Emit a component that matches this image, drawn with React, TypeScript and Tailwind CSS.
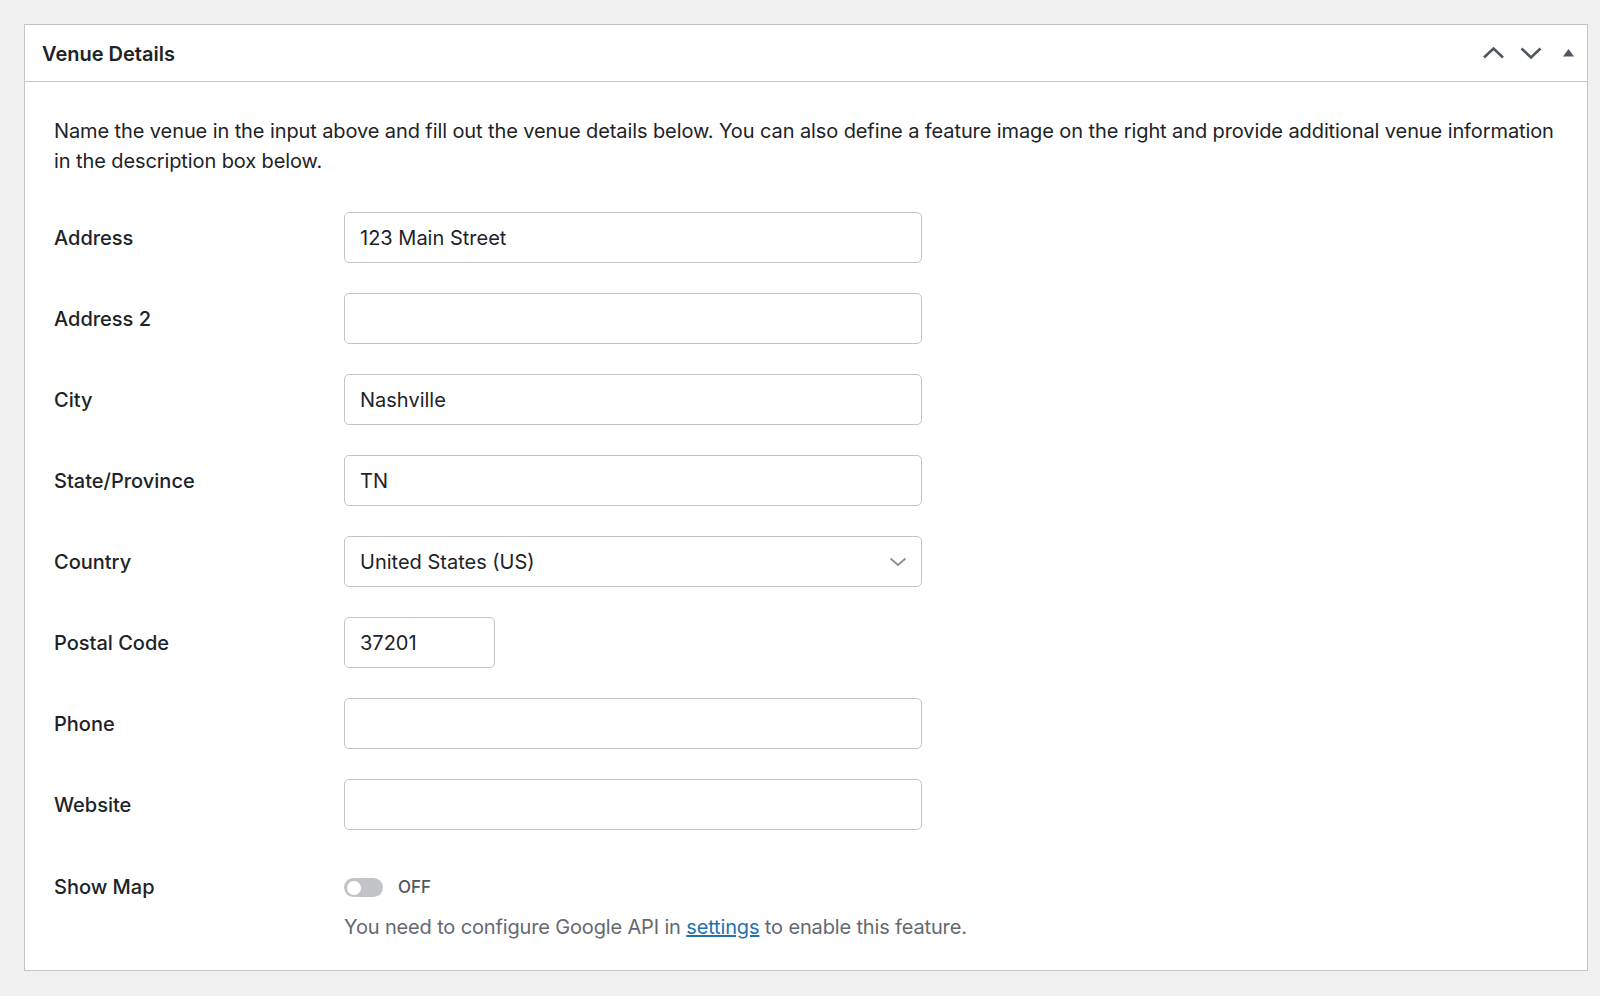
import React from "react";

const font = { fontFamily: "Inter, 'Noto Sans', sans-serif" };

function Field({ label, value, narrow }: { label: string; value?: string; narrow?: boolean }) {
  return (
    <div className="flex items-center">
      <div className="w-[290px] shrink-0 text-[20px] font-medium text-[#1d2327]">{label}</div>
      <div
        className={`${narrow ? "w-[151px]" : "w-[578px]"} h-[51px] rounded-[5px] border border-[#c3c4c7] bg-white flex items-center px-[15px] text-[20px] text-[#1d2327]`}
      >
        {value}
      </div>
    </div>
  );
}

export default function App() {
  return (
    <div className="min-h-[996px] bg-[#f0f0f1] pt-[24px] pl-[24px] pr-[12px]" style={font}>
      <div className="border border-[#c3c4c7] bg-white h-[947px]">
        <div className="h-[57px] border-b border-[#c3c4c7] flex items-center pl-[17px] pr-[12px]">
          <div className="text-[20px] font-semibold text-[#1d2327] flex-1 pt-[2px]">Venue Details</div>
          <svg width="92" height="20" viewBox="0 0 92 20">
            <path d="M1 14.5 L10.5 5.5 L20 14.5" stroke="#50575e" strokeWidth="2.6" fill="none" />
            <path d="M38.5 5.5 L48 14.5 L57.5 5.5" stroke="#50575e" strokeWidth="2.6" fill="none" />
            <path d="M80 13.5 L85.5 6 L91 13.5 Z" fill="#50575e" />
          </svg>
        </div>
        <div className="pl-[29px] pr-[22px] pt-[34px]">
          <p className="text-[20px] leading-[30px] text-[#1d2327] tracking-[-0.1px]">
            Name the venue in the input above and fill out the venue details below. You can also define a feature image on the right and provide additional venue information in the description box below.
          </p>
          <div className="mt-[36px] flex flex-col gap-[30px]">
            <Field label="Address" value="123 Main Street" />
            <Field label="Address 2" />
            <Field label="City" value="Nashville" />
            <Field label="State/Province" value="TN" />
            <div className="flex items-center">
              <div className="w-[290px] shrink-0 text-[20px] font-medium text-[#1d2327]">Country</div>
              <div className="w-[578px] h-[51px] rounded-[5px] border border-[#c3c4c7] bg-white flex items-center justify-between pl-[15px] pr-[14px] text-[20px] text-[#1d2327]">
                <span>United States (US)</span>
                <svg width="18" height="10" viewBox="0 0 18 10">
                  <path d="M1.5 1.5 L9 8 L16.5 1.5" stroke="#8c8f94" strokeWidth="1.8" fill="none" />
                </svg>
              </div>
            </div>
            <Field label="Postal Code" value="37201" narrow />
            <Field label="Phone" />
            <Field label="Website" />
            <div className="flex">
              <div className="w-[290px] shrink-0 text-[20px] font-medium text-[#1d2327] pt-[12px]">Show Map</div>
              <div className="flex flex-col pt-[15px]">
                <div className="flex items-center gap-[15px]">
                  <div className="w-[39px] h-[19px] rounded-full bg-[#c3c4c7] flex items-center pl-[3px]">
                    <div className="w-[14px] h-[14px] rounded-full bg-white" />
                  </div>
                  <span className="text-[17px] font-medium text-[#50575e]">OFF</span>
                </div>
                <div className="mt-[11px] text-[20px] text-[#646970] tracking-[-0.15px]">
                  You need to configure Google API in{" "}
                  <a href="#" className="text-[#2271b1] underline">settings</a> to enable this feature.
                </div>
              </div>
            </div>
          </div>
        </div>
      </div>
    </div>
  );
}
